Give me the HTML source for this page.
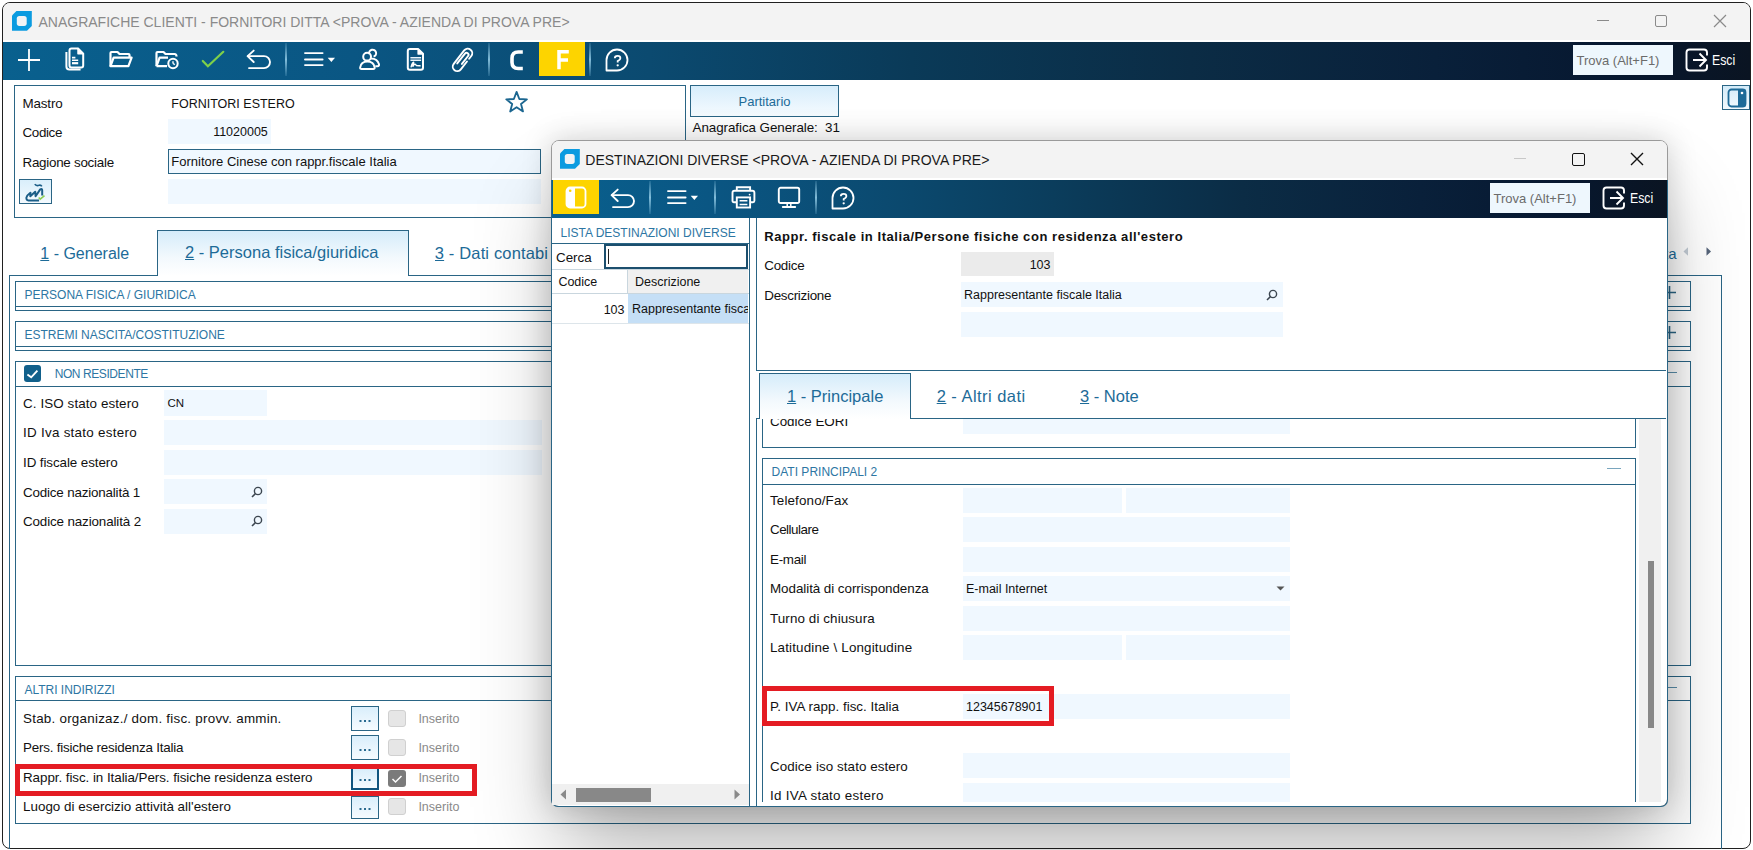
<!DOCTYPE html>
<html><head><meta charset="utf-8"><style>
html,body{margin:0;padding:0;width:1753px;height:850px;overflow:hidden;background:#fff;font-family:"Liberation Sans", sans-serif;}
u{text-decoration:underline;text-underline-offset:1px;}
</style></head><body>
<div style="position:absolute;left:2px;top:2px;width:1749px;height:847px;box-sizing:border-box;border:1px solid #202020;border-radius:8px;background:#fff;overflow:hidden"></div>
<div style="position:absolute;left:3px;top:3px;width:1747px;height:37px;background:#f3f3f3;border-radius:7px 7px 0 0;"></div>
<svg style="position:absolute;left:12px;top:11px;" width="20" height="20" viewBox="0 0 20 20"><path d="M4.4 0H19.8V15L15 19.8H0V4.5Z" fill="#0b9be0"/><rect x="4.8" y="4.9" width="9.9" height="10" rx="2.6" fill="#f1f3f5"/></svg>
<div style="position:absolute;top:15.00px;font-size:14px;line-height:14px;color:#8a8a8a;white-space:nowrap;left:38.50px;">ANAGRAFICHE CLIENTI - FORNITORI DITTA &lt;PROVA - AZIENDA DI PROVA PRE&gt;</div>
<div style="position:absolute;left:1597px;top:20px;width:12px;height:1px;background:#8a8a8a;"></div>
<div style="position:absolute;left:1655px;top:15px;width:12px;height:12px;border:1px solid #8a8a8a;box-sizing:border-box;border-radius:2px;"></div>
<svg style="position:absolute;left:1713px;top:14px;" width="14" height="14" viewBox="0 0 14 14"><path d="M1 1L13 13M13 1L1 13" stroke="#8a8a8a" stroke-width="1.2"/></svg>
<div style="position:absolute;left:3px;top:42px;width:1747px;height:38px;background:linear-gradient(to right,#09608e 0%,#0a5683 20%,#0b4a70 37%,#0a3a58 52%,#0b2c45 68%,#09203a 82%,#071830 92%,#0a1422 100%);"></div>
<svg style="position:absolute;left:16.5px;top:47.5px;" width="24" height="24" viewBox="0 0 24 24"><path d="M12 1V23M1 12H23" stroke="#fff" stroke-width="1.8"/></svg>
<svg style="position:absolute;left:64px;top:47px;" width="22" height="25" viewBox="0 0 22 25"><path d="M7.5 1.5H14L19.2 6.7V18.6Q19.2 20.6 17.2 20.6H7.5Q5.5 20.6 5.5 18.6V3.5Q5.5 1.5 7.5 1.5Z" fill="none" stroke="#fff" stroke-width="2"/><path d="M14 1.5V6.7H19.2Z" fill="#fff" stroke="#fff" stroke-width="1.5" stroke-linejoin="round"/><path d="M2.4 5V19.6Q2.4 22.6 5.4 22.6H16.6" fill="none" stroke="#fff" stroke-width="2"/><path d="M8 10.6H11.4M8 13.2H14.2" stroke="#fff" stroke-width="1.6"/><path d="M8 16.2H14.2" stroke="#fff" stroke-width="2.2"/></svg>
<svg style="position:absolute;left:108px;top:50px;" width="26" height="19" viewBox="0 0 26 19"><path d="M2.5 16.2V3Q2.5 2 3.5 2H9.5L11.5 4H20.5Q21.5 4 21.5 5V7.6" fill="none" stroke="#fff" stroke-width="2.2" stroke-linejoin="round"/><path d="M2.5 16.2L5.6 7.6H23.6L20.4 16.2Z" fill="none" stroke="#fff" stroke-width="2.2" stroke-linejoin="round"/></svg>
<svg style="position:absolute;left:154px;top:50px;" width="26" height="20" viewBox="0 0 26 20"><path d="M2.5 16.2V3Q2.5 2 3.5 2H9.5L11.5 4H20.5Q22.5 4 22.5 6.5" fill="none" stroke="#fff" stroke-width="2.2" stroke-linejoin="round"/><path d="M2.5 16.2L5.6 7.6H14M2.5 16.2H13" fill="none" stroke="#fff" stroke-width="2.2" stroke-linejoin="round"/><circle cx="19" cy="13.5" r="4.7" fill="none" stroke="#fff" stroke-width="2"/><path d="M19 13.5V11.2M19 13.5L20.8 14.6" stroke="#fff" stroke-width="1.4"/></svg>
<svg style="position:absolute;left:200.5px;top:50px;" width="25" height="19" viewBox="0 0 25 19"><path d="M1.8 11L6.9 16.3L22.3 1.8" fill="none" stroke="#7fd04a" stroke-width="2.2" stroke-linecap="round"/></svg>
<svg style="position:absolute;left:246px;top:49px;" width="26" height="21" viewBox="0 0 26 21"><path d="M7.7 1.6L1.6 7.1L7.7 13" fill="none" stroke="#fff" stroke-width="1.9" stroke-linejoin="round" stroke-linecap="round"/><path d="M1.8 7.1H18A6 6 0 0 1 18 19.1H3" fill="none" stroke="#fff" stroke-width="1.9" stroke-linecap="round"/></svg>
<div style="position:absolute;left:285px;top:43px;width:2px;height:33px;background:linear-gradient(to bottom,rgba(140,200,230,0.15),rgba(160,215,240,0.8) 50%,rgba(140,200,230,0.15));"></div>
<svg style="position:absolute;left:303px;top:51px;" width="34" height="17" viewBox="0 0 34 17"><path d="M2 2.1H19.6M2 8.5H19.6M2 14.1H19.6" stroke="#fff" stroke-width="1.9" stroke-linecap="round"/><path d="M24.7 6.8H32L28.35 11.1Z" fill="#fff"/></svg>
<svg style="position:absolute;left:357px;top:47px;" width="25" height="25" viewBox="0 0 25 25"><circle cx="10.1" cy="9.7" r="3.9" fill="none" stroke="#fff" stroke-width="2"/><path d="M4.6 22.1H16.2Q17.9 22.1 17.6 20.4Q16.7 14.6 10.4 14.6Q4.1 14.6 3.2 20.4Q2.9 22.1 4.6 22.1Z" fill="none" stroke="#fff" stroke-width="2"/><path d="M12.2 7.0A3.5 3.5 0 1 1 16.6 9.6" fill="none" stroke="#fff" stroke-width="2"/><path d="M13.6 11.4Q20.6 11.3 22 17.3Q22.4 19.2 20.5 19.2H18.3" fill="none" stroke="#fff" stroke-width="2"/></svg>
<svg style="position:absolute;left:405px;top:47px;" width="21" height="25" viewBox="0 0 21 25"><path d="M4.8 2.1H13.3L18 6.8V20.7Q18 22.7 16 22.7H4.8Q2.8 22.7 2.8 20.7V4.1Q2.8 2.1 4.8 2.1Z" fill="none" stroke="#fff" stroke-width="2" stroke-linejoin="round"/><path d="M13 2.1V7.1H18Z" fill="#fff" stroke="#fff" stroke-width="1.2" stroke-linejoin="round"/><path d="M5.4 10.8H16.1M5.4 13.2H16.1" stroke="#e8f4fb" stroke-width="1.4"/><path d="M6 20.4Q7.2 15.6 8.7 15.3L7.9 19.4Q9.3 16.4 10.5 17.4Q11.2 19.2 15.6 18.7" fill="none" stroke="#fff" stroke-width="1.4" stroke-linejoin="round"/></svg>
<svg style="position:absolute;left:449.5px;top:46.5px;" width="24" height="26" viewBox="0 0 24 26"><g transform="translate(12.2 13.3) rotate(38) translate(-5 -14)"><path d="M9.5 12V22A4.5 4.5 0 0 1 0.5 22V5A4.5 4.5 0 0 1 9.5 5V8.5" fill="none" stroke="#fff" stroke-width="1.9" stroke-linecap="round"/><path d="M3 19.5V7A2 2 0 0 1 7 7V17" fill="none" stroke="#fff" stroke-width="1.9" stroke-linecap="round"/></g></svg>
<div style="position:absolute;left:488px;top:43px;width:2px;height:33px;background:linear-gradient(to bottom,rgba(140,200,230,0.15),rgba(160,215,240,0.8) 50%,rgba(140,200,230,0.15));"></div>
<svg style="position:absolute;left:510px;top:49.5px;" width="14" height="21" viewBox="0 0 14 21"><path d="M12.8 2H8.2Q2 2 2 8.2V12.3Q2 18.5 8.2 18.5H12.8" fill="none" stroke="#fff" stroke-width="3.6"/></svg>
<div style="position:absolute;left:539px;top:42px;width:46px;height:34px;background:#fdd400;"></div>
<svg style="position:absolute;left:556.5px;top:50px;" width="13" height="20" viewBox="0 0 13 20"><path d="M2 19.2V1.8H11.8M2 10H11" fill="none" stroke="#fff" stroke-width="3.5"/></svg>
<div style="position:absolute;left:589px;top:43px;width:2px;height:33px;background:linear-gradient(to bottom,rgba(140,200,230,0.15),rgba(160,215,240,0.8) 50%,rgba(140,200,230,0.15));"></div>
<svg style="position:absolute;left:605px;top:47.5px;" width="24" height="24" viewBox="0 0 24 24"><path d="M12 1.5A10.5 10.5 0 1 1 12 22.5H1.5V12A10.5 10.5 0 0 1 12 1.5Z" fill="none" stroke="#fff" stroke-width="1.8" stroke-linejoin="round"/><path d="M9.8 10.3Q9.8 7.9 12.6 7.9Q15.4 7.9 15.4 10.2Q15.4 11.8 12.7 13.1V14.4" fill="none" stroke="#fff" stroke-width="1.8"/><circle cx="12.7" cy="17.3" r="1.15" fill="#fff"/></svg>
<div style="position:absolute;left:1573px;top:45px;width:100px;height:30px;background:#eef7fd;"></div>
<div style="position:absolute;top:54.00px;font-size:13px;line-height:13px;color:#6b6b6b;white-space:nowrap;left:1576.50px;">Trova (Alt+F1)</div>
<svg style="position:absolute;left:1685px;top:47.5px;" width="24" height="24" viewBox="0 0 24 24"><path d="M22 7.5V4.5Q22 1.5 19 1.5H4.5Q1.5 1.5 1.5 4.5V19.5Q1.5 22.5 4.5 22.5H19Q22 22.5 22 19.5V16.5" fill="none" stroke="#fff" stroke-width="1.9"/><path d="M8 12H21M14.5 5.5L21 12L14.5 18.5" fill="none" stroke="#fff" stroke-width="1.9"/></svg>
<div style="position:absolute;top:52.00px;font-size:15px;line-height:15px;color:#fff;white-space:nowrap;left:1712.40px;transform:scaleX(0.82);transform-origin:0 0;">Esci</div>
<div style="position:absolute;left:14px;top:85px;width:672px;height:133px;border:1px solid #2a6585;box-sizing:border-box;"></div>
<div style="position:absolute;top:97.00px;font-size:13.4px;line-height:13.4px;color:#111;white-space:nowrap;left:22.50px;letter-spacing:-0.160px;">Mastro</div>
<div style="position:absolute;top:126.00px;font-size:13.4px;line-height:13.4px;color:#111;white-space:nowrap;left:22.50px;letter-spacing:-0.360px;">Codice</div>
<div style="position:absolute;top:156.00px;font-size:13.4px;line-height:13.4px;color:#111;white-space:nowrap;left:22.50px;letter-spacing:-0.264px;">Ragione sociale</div>
<div style="position:absolute;top:98.00px;font-size:12.5px;line-height:12.5px;color:#111;white-space:nowrap;left:171.30px;">FORNITORI ESTERO</div>
<div style="position:absolute;left:168px;top:119px;width:103px;height:25px;background:#f0f8ff;"></div>
<div style="position:absolute;top:126.00px;font-size:12.5px;line-height:12.5px;color:#111;white-space:nowrap;right:1485.20px;">11020005</div>
<div style="position:absolute;left:168px;top:149px;width:373px;height:25px;background:#f0f8ff;border:1px solid #2a6585;box-sizing:border-box;"></div>
<div style="position:absolute;top:155.00px;font-size:13px;line-height:13px;color:#111;white-space:nowrap;left:171.30px;">Fornitore Cinese con rappr.fiscale Italia</div>
<div style="position:absolute;left:168px;top:179px;width:373px;height:25px;background:#f0f8ff;"></div>
<div style="position:absolute;left:19px;top:179px;width:33px;height:25px;border:1px solid #2a6585;box-sizing:border-box;background:linear-gradient(#d9eefb,#f4fafe);"></div>
<svg style="position:absolute;left:25px;top:183px;" width="22" height="20" viewBox="0 0 22 20"><path d="M14.1 17.4H3.4Q1.2 17.4 1.4 14.6Q1.8 12.3 5.4 9.7L5.3 13.2L10.2 8.7L10.6 13.2L15.2 6.4Q17.2 5.4 17.2 7.6V12.6" fill="none" stroke="#1b5e88" stroke-width="2" stroke-linejoin="round"/><path d="M9.8 1.2Q11 3.2 14.1 2.3Q16 1.8 16.8 3.4" fill="none" stroke="#1b5e88" stroke-width="1.6"/><path d="M13.7 14.5L15.2 16.1L19.5 12.6" fill="none" stroke="#8ccf55" stroke-width="1.6"/></svg>
<svg style="position:absolute;left:504.3px;top:90.3px;" width="26" height="24" viewBox="0 0 26 24"><g transform="scale(1.05)"><path d="M12 1.8L14.6 8.6L21.8 8.9L16.2 13.4L18.1 20.4L12 16.4L5.9 20.4L7.8 13.4L2.2 8.9L9.4 8.6Z" fill="none" stroke="#1b6690" stroke-width="1.75" stroke-linejoin="round"/></g></svg>
<div style="position:absolute;left:690px;top:85px;width:149px;height:32px;border:1px solid #2a6585;box-sizing:border-box;background:linear-gradient(#d7edfb,#f5fbff);"></div>
<div style="position:absolute;top:95.00px;font-size:13px;line-height:13px;color:#1d6b98;white-space:nowrap;left:738.50px;">Partitario</div>
<div style="position:absolute;top:121.00px;font-size:13.4px;line-height:13.4px;color:#111;white-space:nowrap;left:692.60px;letter-spacing:-0.070px;">Anagrafica Generale:&nbsp; 31</div>
<div style="position:absolute;left:1722px;top:85px;width:28px;height:25px;border:1px solid #2a6585;box-sizing:border-box;background:linear-gradient(#d3ebf9,#f2f9fd);"></div>
<svg style="position:absolute;left:1727px;top:88px;" width="20" height="20" viewBox="0 0 20 20"><rect x="1.5" y="1.5" width="17" height="17" rx="3" fill="none" stroke="#1d6a98" stroke-width="1.8"/><rect x="11" y="1.5" width="7.5" height="17" fill="#1d6a98"/><circle cx="15" cy="5" r="1.3" fill="#fff"/></svg>
<div style="position:absolute;left:9px;top:275px;width:1713px;height:574px;border:1px solid #2a6585;border-bottom:none;box-sizing:border-box;"></div>
<div style="position:absolute;left:157px;top:230px;width:252px;height:46px;border:1px solid #2a6585;border-bottom:none;box-sizing:border-box;background:linear-gradient(#d5ecfa 0%,#f3f9fd 60%,#fff 100%);"></div>
<div style="position:absolute;top:246.00px;font-size:16px;line-height:16px;color:#1d6b98;white-space:nowrap;left:40.30px;"><u>1</u> - Generale</div>
<div style="position:absolute;top:244.00px;font-size:16.5px;line-height:16.5px;color:#1d6b98;white-space:nowrap;left:185.00px;"><u>2</u> - Persona fisica/giuridica</div>
<div style="position:absolute;top:245.00px;font-size:16.5px;line-height:16.5px;color:#1d6b98;white-space:nowrap;left:434.80px;width:113px;overflow:hidden;height:21.45px;letter-spacing:0.15px;"><u>3</u> - Dati contabili</div>
<div style="position:absolute;top:246.00px;font-size:15px;line-height:15px;color:#1d6b98;white-space:nowrap;right:76.50px;">ta</div>
<svg style="position:absolute;left:1683px;top:247px;" width="6" height="9" viewBox="0 0 6 9"><path d="M5 0.3V8.7L0.5 4.5Z" fill="#c3ccd6"/></svg>
<svg style="position:absolute;left:1706px;top:247px;" width="6" height="9" viewBox="0 0 6 9"><path d="M0.5 0.3V8.7L5 4.5Z" fill="#56657a"/></svg>
<div style="position:absolute;left:15px;top:281px;width:1676px;height:30px;border:1px solid #2a6585;box-sizing:border-box;"></div>
<div style="position:absolute;left:15px;top:306px;width:1676px;height:1px;background:#2a6585;"></div>
<div style="position:absolute;top:289.00px;font-size:12px;line-height:12px;color:#2d76a3;white-space:nowrap;left:24.40px;">PERSONA FISICA / GIURIDICA</div>
<div style="position:absolute;left:15px;top:321px;width:1676px;height:30px;border:1px solid #2a6585;box-sizing:border-box;"></div>
<div style="position:absolute;left:15px;top:346px;width:1676px;height:1px;background:#2a6585;"></div>
<div style="position:absolute;top:329.00px;font-size:12px;line-height:12px;color:#2d76a3;white-space:nowrap;left:24.40px;">ESTREMI NASCITA/COSTITUZIONE</div>
<div style="position:absolute;left:15px;top:361px;width:1676px;height:305px;border:1px solid #2a6585;box-sizing:border-box;"></div>
<div style="position:absolute;left:15px;top:386px;width:1676px;height:1px;background:#2a6585;"></div>
<div style="position:absolute;top:368.00px;font-size:12px;line-height:12px;color:#2d76a3;white-space:nowrap;left:54.70px;letter-spacing:-0.42px;">NON RESIDENTE</div>
<div style="position:absolute;left:15px;top:676px;width:1676px;height:148px;border:1px solid #2a6585;box-sizing:border-box;"></div>
<div style="position:absolute;left:15px;top:700px;width:1676px;height:1px;background:#2a6585;"></div>
<div style="position:absolute;top:684.00px;font-size:12px;line-height:12px;color:#2d76a3;white-space:nowrap;left:24.40px;">ALTRI INDIRIZZI</div>
<svg style="position:absolute;left:1663px;top:285.5px;" width="14" height="13" viewBox="0 0 14 13"><path d="M0.5 6.5H13M6.5 0V13" stroke="#2a6585" stroke-width="1.6"/></svg>
<svg style="position:absolute;left:1663px;top:325.5px;" width="14" height="13" viewBox="0 0 14 13"><path d="M0.5 6.5H13M6.5 0V13" stroke="#2a6585" stroke-width="1.6"/></svg>
<div style="position:absolute;left:1667px;top:372px;width:10px;height:1px;background:#5a8eab;"></div>
<div style="position:absolute;left:1667px;top:687px;width:10px;height:1px;background:#5a8eab;"></div>
<div style="position:absolute;left:24px;top:365px;width:17px;height:17px;background:#11608b;border-radius:3px;"></div>
<svg style="position:absolute;left:24px;top:365px;" width="17" height="17" viewBox="0 0 17 17"><path d="M3.4 9.4L7.2 12.3L13.4 5.7" fill="none" stroke="#fff" stroke-width="1.9"/></svg>
<div style="position:absolute;top:397.00px;font-size:13.4px;line-height:13.4px;color:#111;white-space:nowrap;left:23.00px;letter-spacing:0.100px;">C. ISO stato estero</div>
<div style="position:absolute;left:164px;top:390px;width:103px;height:26px;background:#f0f8ff;"></div>
<div style="position:absolute;top:398.00px;font-size:11.5px;line-height:11.5px;color:#111;white-space:nowrap;left:167.50px;">CN</div>
<div style="position:absolute;top:426.00px;font-size:13.4px;line-height:13.4px;color:#111;white-space:nowrap;left:23.00px;letter-spacing:0.278px;">ID Iva stato estero</div>
<div style="position:absolute;left:164px;top:420px;width:378px;height:25px;background:#f0f8ff;"></div>
<div style="position:absolute;top:456.00px;font-size:13.4px;line-height:13.4px;color:#111;white-space:nowrap;left:23.00px;letter-spacing:-0.088px;">ID fiscale estero</div>
<div style="position:absolute;left:164px;top:450px;width:378px;height:25px;background:#f0f8ff;"></div>
<div style="position:absolute;top:486.00px;font-size:13.4px;line-height:13.4px;color:#111;white-space:nowrap;left:23.00px;letter-spacing:-0.179px;">Codice nazionalit&agrave; 1</div>
<div style="position:absolute;left:164px;top:479px;width:103px;height:25px;background:#f0f8ff;"></div>
<svg style="position:absolute;left:251px;top:485.5px;" width="12" height="12" viewBox="0 0 12 12"><circle cx="7" cy="5" r="3.6" fill="none" stroke="#3c4650" stroke-width="1.4"/><path d="M4.5 7.5L1 11" stroke="#3c4650" stroke-width="1.6"/></svg>
<div style="position:absolute;top:515.00px;font-size:13.4px;line-height:13.4px;color:#111;white-space:nowrap;left:23.00px;letter-spacing:-0.132px;">Codice nazionalit&agrave; 2</div>
<div style="position:absolute;left:164px;top:509px;width:103px;height:25px;background:#f0f8ff;"></div>
<svg style="position:absolute;left:251px;top:515.2px;" width="12" height="12" viewBox="0 0 12 12"><circle cx="7" cy="5" r="3.6" fill="none" stroke="#3c4650" stroke-width="1.4"/><path d="M4.5 7.5L1 11" stroke="#3c4650" stroke-width="1.6"/></svg>
<div style="position:absolute;top:712.00px;font-size:13.4px;line-height:13.4px;color:#111;white-space:nowrap;left:23.00px;letter-spacing:0.244px;">Stab. organizaz./ dom. fisc. provv. ammin.</div>
<div style="position:absolute;left:351px;top:706px;width:28px;height:25px;border:1px solid #2a6585;box-sizing:border-box;background:linear-gradient(#d9eefb,#f6fbff);"></div>
<svg style="position:absolute;left:359px;top:720.2px;" width="12" height="3" viewBox="0 0 12 3"><rect x="0.5" y="0" width="2" height="2" fill="#2a6a90"/><rect x="5" y="0" width="2" height="2" fill="#2a6a90"/><rect x="9.5" y="0" width="2" height="2" fill="#2a6a90"/></svg>
<div style="position:absolute;left:388px;top:709.5px;width:17.5px;height:17.5px;background:#e6e6e6;border:1px solid #d0d0d0;box-sizing:border-box;border-radius:3px;"></div>
<div style="position:absolute;top:713.00px;font-size:12.5px;line-height:12.5px;color:#8a8a8a;white-space:nowrap;left:418.40px;">Inserito</div>
<div style="position:absolute;top:741.00px;font-size:13.4px;line-height:13.4px;color:#111;white-space:nowrap;left:23.00px;letter-spacing:-0.217px;">Pers. fisiche residenza Italia</div>
<div style="position:absolute;left:351px;top:735px;width:28px;height:25px;border:1px solid #2a6585;box-sizing:border-box;background:linear-gradient(#d9eefb,#f6fbff);"></div>
<svg style="position:absolute;left:359px;top:749px;" width="12" height="3" viewBox="0 0 12 3"><rect x="0.5" y="0" width="2" height="2" fill="#2a6a90"/><rect x="5" y="0" width="2" height="2" fill="#2a6a90"/><rect x="9.5" y="0" width="2" height="2" fill="#2a6a90"/></svg>
<div style="position:absolute;left:388px;top:738.5px;width:17.5px;height:17.5px;background:#e6e6e6;border:1px solid #d0d0d0;box-sizing:border-box;border-radius:3px;"></div>
<div style="position:absolute;top:742.00px;font-size:12.5px;line-height:12.5px;color:#8a8a8a;white-space:nowrap;left:418.40px;">Inserito</div>
<div style="position:absolute;top:771.00px;font-size:13.4px;line-height:13.4px;color:#111;white-space:nowrap;left:23.00px;letter-spacing:-0.058px;">Rappr. fisc. in Italia/Pers. fisiche residenza estero</div>
<div style="position:absolute;left:351px;top:767px;width:28px;height:23px;border:2px solid #11557f;box-sizing:border-box;background:linear-gradient(#d9eefb,#f6fbff);"></div>
<svg style="position:absolute;left:359px;top:779.3px;" width="12" height="3" viewBox="0 0 12 3"><rect x="0.5" y="0" width="2" height="2" fill="#2a6a90"/><rect x="5" y="0" width="2" height="2" fill="#2a6a90"/><rect x="9.5" y="0" width="2" height="2" fill="#2a6a90"/></svg>
<div style="position:absolute;left:388px;top:769.5px;width:17.5px;height:17.5px;background:#7b7b7b;border-radius:3px;"></div>
<svg style="position:absolute;left:388px;top:769.5px;" width="18" height="18" viewBox="0 0 18 18"><path d="M4.5 9L7.5 12L13.5 6" fill="none" stroke="#fff" stroke-width="1.5"/></svg>
<div style="position:absolute;top:772.00px;font-size:12.5px;line-height:12.5px;color:#8a8a8a;white-space:nowrap;left:418.40px;">Inserito</div>
<div style="position:absolute;top:800.00px;font-size:13.4px;line-height:13.4px;color:#111;white-space:nowrap;left:23.00px;letter-spacing:0.019px;">Luogo di esercizio attivit&agrave; all'estero</div>
<div style="position:absolute;left:351px;top:796px;width:28px;height:23px;border:1px solid #2a6585;box-sizing:border-box;background:linear-gradient(#d9eefb,#f6fbff);"></div>
<svg style="position:absolute;left:359px;top:808px;" width="12" height="3" viewBox="0 0 12 3"><rect x="0.5" y="0" width="2" height="2" fill="#2a6a90"/><rect x="5" y="0" width="2" height="2" fill="#2a6a90"/><rect x="9.5" y="0" width="2" height="2" fill="#2a6a90"/></svg>
<div style="position:absolute;left:388px;top:797.5px;width:17.5px;height:17.5px;background:#e6e6e6;border:1px solid #d0d0d0;box-sizing:border-box;border-radius:3px;"></div>
<div style="position:absolute;top:801.00px;font-size:12.5px;line-height:12.5px;color:#8a8a8a;white-space:nowrap;left:418.40px;">Inserito</div>
<div style="position:absolute;left:15px;top:764px;width:462px;height:32px;border:5px solid #e41c23;box-sizing:border-box;"></div>
<div style="position:absolute;left:551px;top:140px;width:1117px;height:667px;box-sizing:border-box;border:1px solid #9a9a9a;border-radius:8px;background:#fff;box-shadow:0 0 30px rgba(0,0,0,0.18),0 50px 80px -10px rgba(0,0,0,0.30);overflow:hidden"></div>
<div style="position:absolute;left:552px;top:141px;width:1115px;height:37px;background:#f3f3f3;border-radius:7px 7px 0 0;"></div>
<svg style="position:absolute;left:560px;top:149px;" width="20" height="20" viewBox="0 0 20 20"><path d="M4.4 0H19.8V15L15 19.8H0V4.5Z" fill="#0b9be0"/><rect x="4.8" y="4.9" width="9.9" height="10" rx="2.6" fill="#f1f3f5"/></svg>
<div style="position:absolute;top:153.00px;font-size:14px;line-height:14px;color:#1a1a1a;white-space:nowrap;left:585.30px;">DESTINAZIONI DIVERSE &lt;PROVA - AZIENDA DI PROVA PRE&gt;</div>
<div style="position:absolute;left:1514px;top:158px;width:12px;height:1px;background:#c8c8c8;"></div>
<div style="position:absolute;left:1572px;top:153px;width:12.5px;height:12.5px;border:1.5px solid #111;box-sizing:border-box;border-radius:2px;"></div>
<svg style="position:absolute;left:1630px;top:152px;" width="14" height="14" viewBox="0 0 14 14"><path d="M1 1L13 13M13 1L1 13" stroke="#111" stroke-width="1.4"/></svg>
<div style="position:absolute;left:551px;top:180px;width:1116px;height:38px;background:linear-gradient(to right,#09608e 0%,#0a5683 14%,#0b4a70 30%,#0b3d5c 45%,#0b2c45 62%,#09203a 78%,#071830 90%,#0a1422 100%);"></div>
<div style="position:absolute;left:551px;top:180px;width:1117px;height:627px;border:1px solid #2a6585;border-top:none;box-sizing:border-box;border-radius:0 0 7px 7px;"></div>
<div style="position:absolute;left:553px;top:180px;width:46px;height:34px;background:#fdd400;"></div>
<svg style="position:absolute;left:565px;top:186px;" width="22" height="23" viewBox="0 0 22 23"><rect x="1.5" y="1.5" width="19" height="20" rx="3.5" fill="none" stroke="#fff" stroke-width="1.8"/><path d="M5 1.5H10V21.5H5Q1.5 21.5 1.5 18V5Q1.5 1.5 5 1.5Z" fill="#fff"/><circle cx="5.2" cy="4.8" r="1.3" fill="#fdd400"/></svg>
<svg style="position:absolute;left:609.5px;top:187.5px;" width="26" height="21" viewBox="0 0 26 21"><path d="M7.7 1.6L1.6 7.1L7.7 13" fill="none" stroke="#fff" stroke-width="1.9" stroke-linejoin="round" stroke-linecap="round"/><path d="M1.8 7.1H18A6 6 0 0 1 18 19.1H3" fill="none" stroke="#fff" stroke-width="1.9" stroke-linecap="round"/></svg>
<div style="position:absolute;left:649px;top:181px;width:2px;height:33px;background:linear-gradient(to bottom,rgba(140,200,230,0.15),rgba(160,215,240,0.8) 50%,rgba(140,200,230,0.15));"></div>
<svg style="position:absolute;left:666.3px;top:188.5px;" width="34" height="17" viewBox="0 0 34 17"><path d="M2 2.1H19.6M2 8.5H19.6M2 14.1H19.6" stroke="#fff" stroke-width="1.9" stroke-linecap="round"/><path d="M24.7 6.8H32L28.35 11.1Z" fill="#fff"/></svg>
<div style="position:absolute;left:714px;top:181px;width:2px;height:33px;background:linear-gradient(to bottom,rgba(140,200,230,0.15),rgba(160,215,240,0.8) 50%,rgba(140,200,230,0.15));"></div>
<svg style="position:absolute;left:730.5px;top:186px;" width="25" height="23" viewBox="0 0 25 23"><path d="M5.8 4.8V1.3H19.1V4.8" fill="none" stroke="#fff" stroke-width="1.9"/><path d="M5.5 16.3H3Q1.5 16.3 1.5 14.8V6.8Q1.5 4.8 3.5 4.8H21.4Q23.4 4.8 23.4 6.8V14.8Q23.4 16.3 21.9 16.3H19.4" fill="none" stroke="#fff" stroke-width="1.9"/><rect x="5.8" y="11.4" width="13.3" height="10.1" fill="none" stroke="#fff" stroke-width="1.9"/><path d="M8.6 14.8H16.4M8.6 18.4H16.4" stroke="#fff" stroke-width="1.5"/><circle cx="18.6" cy="8.6" r="0.9" fill="#fff"/></svg>
<svg style="position:absolute;left:776.5px;top:186px;" width="24" height="23" viewBox="0 0 24 23"><rect x="1.8" y="1.8" width="20.4" height="15.2" rx="1.8" fill="none" stroke="#fff" stroke-width="1.9"/><path d="M10.2 17V20M13.8 17V20" stroke="#fff" stroke-width="1.5"/><path d="M5.8 21H18.2" stroke="#fff" stroke-width="1.9" stroke-linecap="round"/></svg>
<div style="position:absolute;left:815px;top:181px;width:2px;height:33px;background:linear-gradient(to bottom,rgba(140,200,230,0.15),rgba(160,215,240,0.8) 50%,rgba(140,200,230,0.15));"></div>
<svg style="position:absolute;left:831px;top:186px;" width="24" height="24" viewBox="0 0 24 24"><path d="M12 1.5A10.5 10.5 0 1 1 12 22.5H1.5V12A10.5 10.5 0 0 1 12 1.5Z" fill="none" stroke="#fff" stroke-width="1.8" stroke-linejoin="round"/><path d="M9.8 10.3Q9.8 7.9 12.6 7.9Q15.4 7.9 15.4 10.2Q15.4 11.8 12.7 13.1V14.4" fill="none" stroke="#fff" stroke-width="1.8"/><circle cx="12.7" cy="17.3" r="1.15" fill="#fff"/></svg>
<div style="position:absolute;left:1490px;top:183px;width:100px;height:30px;background:#eef7fd;"></div>
<div style="position:absolute;top:192.00px;font-size:13px;line-height:13px;color:#6b6b6b;white-space:nowrap;left:1493.50px;">Trova (Alt+F1)</div>
<svg style="position:absolute;left:1601.5px;top:186px;" width="24" height="24" viewBox="0 0 24 24"><path d="M22 7.5V4.5Q22 1.5 19 1.5H4.5Q1.5 1.5 1.5 4.5V19.5Q1.5 22.5 4.5 22.5H19Q22 22.5 22 19.5V16.5" fill="none" stroke="#fff" stroke-width="1.9"/><path d="M8 12H21M14.5 5.5L21 12L14.5 18.5" fill="none" stroke="#fff" stroke-width="1.9"/></svg>
<div style="position:absolute;top:190.00px;font-size:15px;line-height:15px;color:#fff;white-space:nowrap;left:1629.50px;transform:scaleX(0.82);transform-origin:0 0;">Esci</div>
<div style="position:absolute;left:749px;top:218px;width:2px;height:588px;background:#2a6585;width:1px;"></div>
<div style="position:absolute;top:227.00px;font-size:12px;line-height:12px;color:#2d76a3;white-space:nowrap;left:560.50px;">LISTA DESTINAZIONI DIVERSE</div>
<div style="position:absolute;left:552px;top:243px;width:197px;height:1px;background:#2a6585;"></div>
<div style="position:absolute;top:251.00px;font-size:13.4px;line-height:13.4px;color:#111;white-space:nowrap;left:556.00px;">Cerca</div>
<div style="position:absolute;left:604px;top:244px;width:144px;height:25px;border:2px solid #1c4f6e;box-sizing:border-box;background:#fff;"></div>
<div style="position:absolute;left:608px;top:249px;width:1px;height:15px;background:#222;"></div>
<div style="position:absolute;left:552px;top:269px;width:197px;height:1px;background:#c9d6de;"></div>
<div style="position:absolute;left:628px;top:270px;width:120px;height:23px;background:#f0f0f0;"></div>
<div style="position:absolute;top:276.00px;font-size:12.5px;line-height:12.5px;color:#111;white-space:nowrap;left:558.40px;">Codice</div>
<div style="position:absolute;top:276.00px;font-size:12.5px;line-height:12.5px;color:#111;white-space:nowrap;left:635.00px;">Descrizione</div>
<div style="position:absolute;left:627px;top:270px;width:1px;height:23px;background:#c9d6de;"></div>
<div style="position:absolute;left:552px;top:293px;width:197px;height:1px;background:#c9d6de;"></div>
<div style="position:absolute;left:628px;top:294px;width:120px;height:29px;background:#c5dff6;"></div>
<div style="position:absolute;top:304.00px;font-size:12.5px;line-height:12.5px;color:#111;white-space:nowrap;right:1128.50px;">103</div>
<div style="position:absolute;left:632px;top:302.9px;width:116px;overflow:hidden;font-size:12.5px;line-height:12.5px;white-space:nowrap;color:#111">Rappresentante fiscale Italia</div>
<div style="position:absolute;left:552px;top:323px;width:197px;height:1px;background:#dde5ea;"></div>
<div style="position:absolute;left:552px;top:784px;width:197px;height:21px;background:#f0f0f0;"></div>
<div style="position:absolute;left:576px;top:788px;width:75px;height:13.5px;background:#888;"></div>
<svg style="position:absolute;left:560px;top:789px;" width="7" height="11" viewBox="0 0 7 11"><path d="M6 0.5V10.5L0.5 5.5Z" fill="#8a8a8a"/></svg>
<svg style="position:absolute;left:734px;top:789px;" width="7" height="11" viewBox="0 0 7 11"><path d="M0.5 0.5V10.5L6 5.5Z" fill="#8a8a8a"/></svg>
<div style="position:absolute;left:756px;top:218px;width:1px;height:153px;background:#2a6585;"></div>
<div style="position:absolute;left:756px;top:418px;width:1px;height:388px;background:#2a6585;"></div>
<div style="position:absolute;top:230.00px;font-size:13px;line-height:13px;color:#111;white-space:nowrap;font-weight:bold;left:764.30px;letter-spacing:0.55px;">Rappr. fiscale in Italia/Persone fisiche con residenza all'estero</div>
<div style="position:absolute;top:259.00px;font-size:13.4px;line-height:13.4px;color:#111;white-space:nowrap;left:764.30px;letter-spacing:-0.280px;">Codice</div>
<div style="position:absolute;left:961px;top:252px;width:93px;height:24px;background:#ebebeb;"></div>
<div style="position:absolute;top:259.00px;font-size:12.5px;line-height:12.5px;color:#111;white-space:nowrap;right:702.50px;">103</div>
<div style="position:absolute;top:289.00px;font-size:13.4px;line-height:13.4px;color:#111;white-space:nowrap;left:764.30px;letter-spacing:-0.280px;">Descrizione</div>
<div style="position:absolute;left:961px;top:282px;width:322px;height:25px;background:#f0f8ff;"></div>
<div style="position:absolute;top:289.00px;font-size:12.5px;line-height:12.5px;color:#111;white-space:nowrap;left:964.00px;">Rappresentante fiscale Italia</div>
<svg style="position:absolute;left:1266px;top:288.5px;" width="12" height="12" viewBox="0 0 12 12"><circle cx="7" cy="5" r="3.6" fill="none" stroke="#3c4650" stroke-width="1.4"/><path d="M4.5 7.5L1 11" stroke="#3c4650" stroke-width="1.6"/></svg>
<div style="position:absolute;left:961px;top:312px;width:322px;height:25px;background:#f0f8ff;"></div>
<div style="position:absolute;left:756px;top:370px;width:910px;height:1px;background:#2a6585;"></div>
<div style="position:absolute;left:757px;top:418px;width:909px;height:1px;background:#2a6585;"></div>
<div style="position:absolute;left:759px;top:373px;width:152px;height:46px;border:1px solid #2a6585;border-bottom:none;box-sizing:border-box;background:linear-gradient(#d5ecfa 0%,#f3f9fd 60%,#fff 100%);"></div>
<div style="position:absolute;top:388.00px;font-size:16.5px;line-height:16.5px;color:#1d6b98;white-space:nowrap;left:787.00px;"><u>1</u> - Principale</div>
<div style="position:absolute;top:388.00px;font-size:16.5px;line-height:16.5px;color:#1d6b98;white-space:nowrap;left:936.70px;letter-spacing:0.45px;"><u>2</u> - Altri dati</div>
<div style="position:absolute;top:388.00px;font-size:16.5px;line-height:16.5px;color:#1d6b98;white-space:nowrap;left:1080.00px;"><u>3</u> - Note</div>
<div style="position:absolute;left:757px;top:419px;width:909px;height:383px;overflow:hidden">
<div style="position:absolute;left:5px;top:-39px;width:874px;height:68px;border:1px solid #2a6585;box-sizing:border-box;"></div>
<div style="position:absolute;left:13px;top:-4.00px;font-size:13.4px;line-height:13.4px;color:#111;white-space:nowrap;">Codice EORI</div>
<div style="position:absolute;left:206px;top:-7px;width:327px;height:22px;background:#f0f8ff;"></div>
<div style="position:absolute;left:5px;top:39px;width:874px;height:442px;border:1px solid #2a6585;box-sizing:border-box;"></div>
<div style="position:absolute;left:5px;top:65px;width:874px;height:1px;background:#2a6585;"></div>
<div style="position:absolute;left:14.600000000000023px;top:47.00px;font-size:12px;line-height:12px;color:#2d76a3;white-space:nowrap;">DATI PRINCIPALI 2</div>
<div style="position:absolute;left:850px;top:49px;width:14px;height:1px;background:#7aa6be;"></div>
<div style="position:absolute;left:13px;top:75.00px;font-size:13.4px;line-height:13.4px;color:#111;white-space:nowrap;letter-spacing:0.136px;">Telefono/Fax</div>
<div style="position:absolute;left:206px;top:69px;width:159px;height:25px;background:#f0f8ff;"></div>
<div style="position:absolute;left:369px;top:69px;width:164px;height:25px;background:#f0f8ff;"></div>
<div style="position:absolute;left:13px;top:104.00px;font-size:13.4px;line-height:13.4px;color:#111;white-space:nowrap;letter-spacing:-0.500px;">Cellulare</div>
<div style="position:absolute;left:206px;top:98px;width:327px;height:25px;background:#f0f8ff;"></div>
<div style="position:absolute;left:13px;top:134.00px;font-size:13.4px;line-height:13.4px;color:#111;white-space:nowrap;letter-spacing:-0.280px;">E-mail</div>
<div style="position:absolute;left:206px;top:128px;width:327px;height:25px;background:#f0f8ff;"></div>
<div style="position:absolute;left:13px;top:163.00px;font-size:13.4px;line-height:13.4px;color:#111;white-space:nowrap;letter-spacing:-0.052px;">Modalit&agrave; di corrispondenza</div>
<div style="position:absolute;left:206px;top:157px;width:327px;height:25px;background:#f0f8ff;"></div>
<div style="position:absolute;left:209px;top:164.00px;font-size:12.5px;line-height:12.5px;color:#111;white-space:nowrap;">E-mail Internet</div>
<svg style="position:absolute;left:519px;top:167px" width="9" height="5"><path d="M0.5 0.5H8.5L4.5 4.5Z" fill="#555"/></svg>
<div style="position:absolute;left:13px;top:193.00px;font-size:13.4px;line-height:13.4px;color:#111;white-space:nowrap;letter-spacing:0.106px;">Turno di chiusura</div>
<div style="position:absolute;left:206px;top:187px;width:327px;height:25px;background:#f0f8ff;"></div>
<div style="position:absolute;left:13px;top:222.00px;font-size:13.4px;line-height:13.4px;color:#111;white-space:nowrap;letter-spacing:0.157px;">Latitudine \ Longitudine</div>
<div style="position:absolute;left:206px;top:216px;width:159px;height:25px;background:#f0f8ff;"></div>
<div style="position:absolute;left:369px;top:216px;width:164px;height:25px;background:#f0f8ff;"></div>
<div style="position:absolute;left:13px;top:281.00px;font-size:13.4px;line-height:13.4px;color:#111;white-space:nowrap;letter-spacing:0.033px;">P. IVA rapp. fisc. Italia</div>
<div style="position:absolute;left:206px;top:275px;width:327px;height:25px;background:#f0f8ff;"></div>
<div style="position:absolute;left:209px;top:282.00px;font-size:12.5px;line-height:12.5px;color:#111;white-space:nowrap;">12345678901</div>
<div style="position:absolute;left:13px;top:341.00px;font-size:13.4px;line-height:13.4px;color:#111;white-space:nowrap;letter-spacing:0.073px;">Codice iso stato estero</div>
<div style="position:absolute;left:206px;top:334px;width:327px;height:25px;background:#f0f8ff;"></div>
<div style="position:absolute;left:13px;top:370.00px;font-size:13.4px;line-height:13.4px;color:#111;white-space:nowrap;letter-spacing:0.278px;">Id IVA stato estero</div>
<div style="position:absolute;left:206px;top:364px;width:327px;height:25px;background:#f0f8ff;"></div>
</div>
<div style="position:absolute;left:762px;top:686px;width:292px;height:40px;border:5px solid #e41c23;box-sizing:border-box;"></div>
<div style="position:absolute;left:1639px;top:419px;width:22px;height:383px;background:#f0f0f0;"></div>
<div style="position:absolute;left:1648px;top:561px;width:6px;height:167px;background:#888;"></div>
</body></html>
